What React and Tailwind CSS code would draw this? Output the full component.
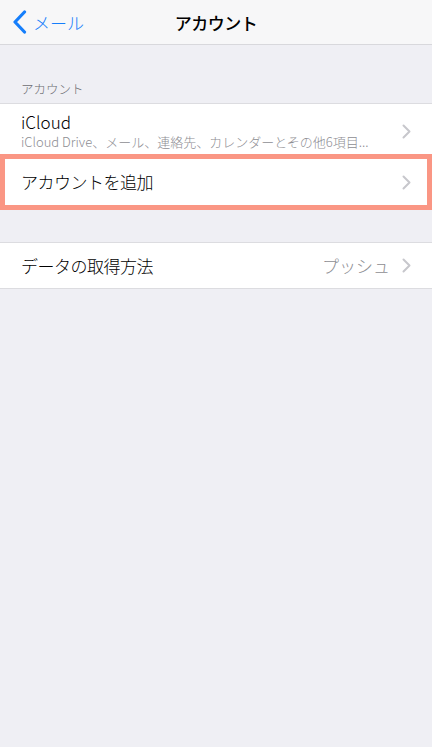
import React from "react";

const font = { fontFamily: '"Noto Sans CJK JP", "Noto Sans", sans-serif' };

function Chevron({ className = "" }) {
  return (
    <svg width="9" height="15" viewBox="0 0 9 15" className={className}>
      <path d="M1.5 1.5 L7.5 7.5 L1.5 13.5" fill="none" stroke="#c7c7cc" strokeWidth="2" strokeLinecap="round" strokeLinejoin="round" />
    </svg>
  );
}

export default function App() {
  return (
    <div className="w-[432px] h-[747px] bg-[#efeff4] overflow-hidden font-light" style={font}>
      {/* nav */}
      <div className="relative h-[45px] bg-[#f7f7f8] border-b border-[#d8d8dc] flex items-center">
        <div className="flex items-center pl-[12px]">
          <svg width="15" height="24" viewBox="0 0 15 24">
            <path d="M12.5 2 L3 12 L12.5 22" fill="none" stroke="#157efb" strokeWidth="3.2" strokeLinecap="round" strokeLinejoin="round" />
          </svg>
          <span className="ml-[6px] text-[17px] leading-none text-[#157efb]">メール</span>
        </div>
        <div className="absolute inset-0 flex items-center justify-center pointer-events-none">
          <span className="text-[17px] font-medium text-black leading-none tracking-[-0.5px]">アカウント</span>
        </div>
      </div>

      {/* section header */}
      <div className="h-[58px] flex items-end pl-[21px] pb-[8px]">
        <span className="text-[12.5px] text-[#6d6d72] leading-none">アカウント</span>
      </div>

      <div className="bg-white border-t border-b border-[#dcdce0]">
        <div className="flex items-center h-[54px] pl-[21px] pr-[21px]">
          <div className="flex-1 flex flex-col justify-center pb-[1px]">
            <div className="text-[17px] leading-[19px] h-[19px] text-black">iCloud</div>
            <div className="text-[13px] leading-[15px] h-[15px] mt-[3px] text-[#8e8e93] whitespace-nowrap">iCloud Drive、メール、連絡先、カレンダーとその他6項目...</div>
          </div>
          <Chevron />
        </div>
        <div className="relative ml-[21px] h-px bg-[#dcdce0]" />
        <div className="relative flex items-center h-[46px] pl-[21px] pr-[21px]">
          <span className="flex-1 text-[17px] text-black tracking-[-0.5px]">アカウントを追加</span>
          <Chevron />
          <div className="absolute left-0 right-0 top-[-5px] bottom-[-5px] border-[5px] border-[#fa9684] pointer-events-none" />
        </div>
      </div>

      <div className="h-[36px]" />

      <div className="bg-white border-t border-b border-[#dcdce0]">
        <div className="flex items-center h-[45px] pl-[21px] pr-[21px]">
          <span className="flex-1 text-[17px] text-black tracking-[-0.5px]">データの取得方法</span>
          <span className="text-[17px] text-[#8e8e93] mr-[12px]">プッシュ</span>
          <Chevron />
        </div>
      </div>
    </div>
  );
}
